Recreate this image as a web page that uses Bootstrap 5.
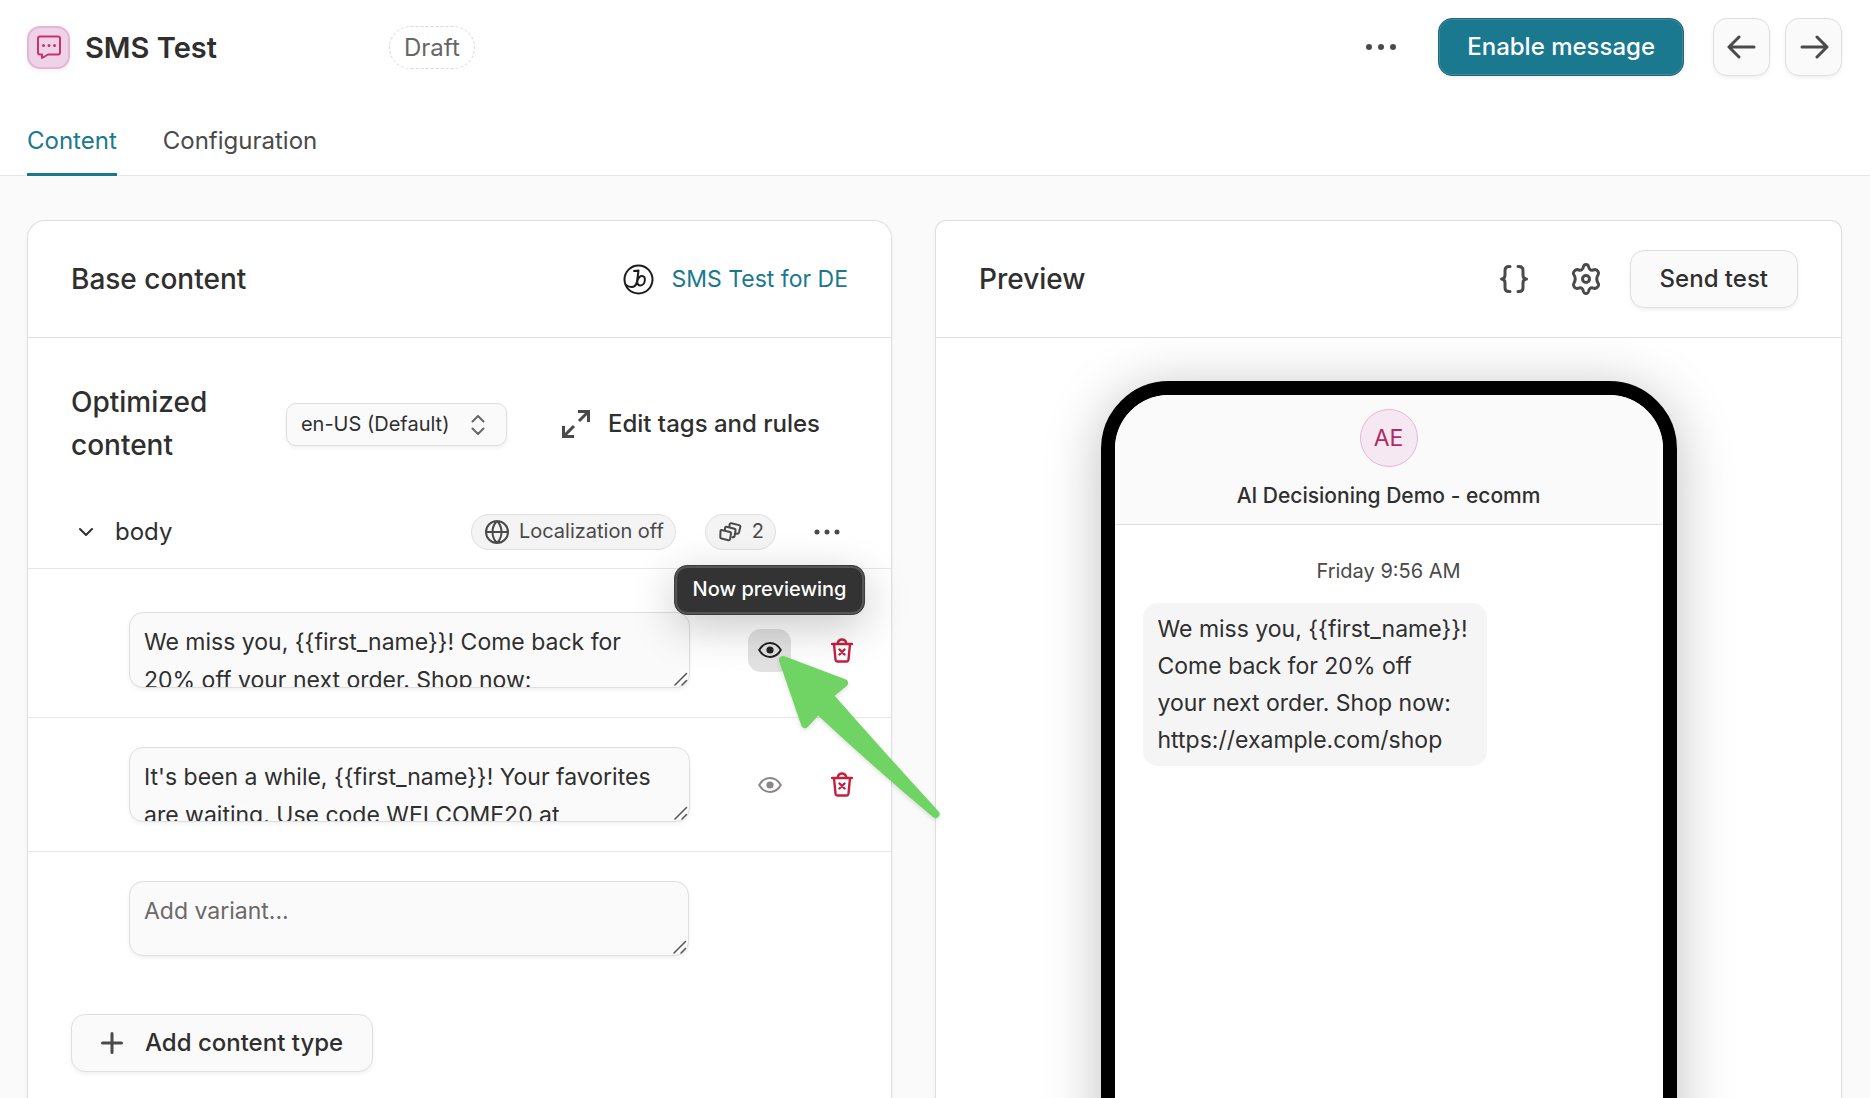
<!DOCTYPE html>
<html lang="en">
<head>
<meta charset="utf-8">
<meta name="viewport" content="width=device-width, initial-scale=1">
<title>SMS Test</title>
<link href="https://cdn.jsdelivr.net/npm/bootstrap@5.3.0/dist/css/bootstrap.min.css" rel="stylesheet">
<style>
  :root { --ink: #2f2f2f; --ink-2: #4a4a4a; --line: #dfdfdf; --soft: #fafafa; --teal: #1a788f; --red: #c3203f; --gap: 29px; --edge: 43px; }
  body { font-family: Inter, "Liberation Sans", sans-serif; font-size: 24px; line-height: 37px; color: var(--ink); background: #fff; }
  svg { display: block; flex: none; }
  .ln { fill: none; stroke: currentColor; stroke-width: 2; stroke-linecap: round; stroke-linejoin: round; }
  .ln-bold { stroke-width: 3; }
  .ln-fine { stroke-width: 1.5; }
  a { color: var(--teal); text-decoration: none; }
  .scroller { background: var(--soft); scrollbar-width: none; padding: 44px 28px 0 27px; }
  .scroller::-webkit-scrollbar { display: none; }
  .panels { gap: var(--edge); }

  .topbar { padding: 18px 28px 0 27px; }
  .topbar .tool-primary { margin: 0 29px; padding: 0 28px; }
  .topbar .tool-square + .tool-square { margin-left: 15px; }
  .msg-icon { width: 43px; height: 43px; border-radius: 13px; background: #f0d2e6; border: 2px solid #e6b5d5; color: #cb2f74; box-shadow: 0 2px 5px rgba(0,0,0,.06); }
  .title { font-size: 29px; line-height: 43px; font-weight: 600; margin: 0 0 0 15px; }
  .draft { height: 43px; padding: 0 14px; border: 1px dashed #d8d8d8; border-radius: 22px; color: #666; line-height: 42px; margin-left: 172px; }
  .tabs { gap: 46px; padding: 28px 27px 0; border-bottom: 1px solid #e8e8e8; }
  .tabs .nav-link { padding: 18px 0 14px; color: var(--ink-2); border-bottom: 3px solid transparent; margin-bottom: -1px; }
  .tabs .nav-link.active { color: var(--teal); border-color: var(--teal); }

  .tool { height: 58px; border: 1px solid var(--line); border-radius: 14px; background: var(--soft); color: var(--ink); font-size: 24px; font-weight: 500; padding: 0 29px; box-shadow: 0 2px 4px rgba(0,0,0,.06); }
  .tool-square { width: 57px; padding: 0; color: var(--ink-2); }
  .tool-primary { background: var(--teal); color: #fff; border-color: #2a6270; box-shadow: inset 0 0 0 1px #3c8ca0, 0 2px 4px rgba(0,0,0,.06); }
  .ghost { width: 43px; height: 43px; padding: 0; border: 0; border-radius: 13px; color: var(--ink-2); }
  .ghost.active { background: #e2e2e2; color: #222; }
  .ghost-wide { width: 57px; height: 57px; }

  .panel { background: #fff; border: 1px solid var(--line); border-bottom: 0; box-shadow: 0 2px 4px rgba(0,0,0,.04); min-height: 940px; min-width: 0; }
  .panel-left { flex: 865 1 0; border-radius: 18px 18px 0 0; }
  .panel-right { flex: 907 1 0; border-radius: 11px 11px 0 0; }
  .panel-head { padding: 28px 43px; height: 117px; border-bottom: 1px solid var(--line); }
  .heading { font-size: 28px; line-height: 43px; font-weight: 500; margin: 0; }
  .source { font-size: 23px; gap: 18px; }

  .optim { padding: 43px 43px 28px; gap: 27px; }
  .locale { width: 221px; height: 43px; appearance: none; background: var(--soft); border: 1px solid var(--line); border-radius: 10px; padding: 0 14px; font-size: 20px; color: var(--ink); box-shadow: 0 2px 4px rgba(0,0,0,.06); }
  .locale-mark { right: 22px; top: 12px; pointer-events: none; color: #666; }
  .edit-btn { border: 0; padding: 0 28px; font-size: 24px; font-weight: 500; color: var(--ink); gap: 18px; }

  .type-row { height: 73px; padding: 0 43px; gap: 15px; }
  .chev { width: 29px; color: var(--ink); }
  .pills, .acts { gap: var(--gap); }
  .pill { height: 36px; border: 1px solid var(--line); border-radius: 18px; background: #f4f4f4; color: var(--ink-2); font-size: 20px; padding: 0 11px 0 13px; gap: 10px; }
  .variant { border-top: 1px solid #e8e8e8; padding: var(--gap) 28px var(--gap) 101px; gap: 58px; }
  .variant-first { padding-top: 43px; }
  .variant-empty { padding-right: 202px; }
  .variant-text { width: 100%; height: 75px; resize: none; overflow: hidden; display: block; border: 1px solid var(--line); border-radius: 14px; background: var(--soft); color: var(--ink); padding: 10px 14px; font-size: 23px; line-height: 38px; box-shadow: 0 2px 4px rgba(0,0,0,.06); }
  .variant-first .variant-text { height: 76px; }
  .variant-text::placeholder { color: #6c6868; }
  .grip { right: 1px; bottom: 1px; color: #555; pointer-events: none; }
  .trash { color: var(--red); }
  .trash .ln { stroke-width: 2.4; }
  .muted-eye { color: #8a8688; }
  .adder { padding: 29px 43px; }
  .adder .tool { gap: 22px; }

  .tip { left: 50%; bottom: 57px; transform: translateX(-50%); white-space: nowrap; height: 50px; font-size: 20px; font-weight: 500; color: #fff; background: #333; border: 1px solid #3c3c3c; border-radius: 13px; padding: 0 18px; box-shadow: inset 0 0 0 2px #565656, 0 12px 44px rgba(0,0,0,.22); z-index: 5; }
  .pointer { left: 26px; top: 23px; z-index: 6; filter: drop-shadow(0 2px 2px rgba(0,0,0,.12)); pointer-events: none; }

  .head-tools { gap: 15px; }
  .phone-area { padding: 43px 0 0; overflow: hidden; }
  .phone { width: 576px; max-width: 92%; height: 1150px; border: 14px solid #000; border-radius: 68px; background: #fff; box-shadow: 0 8px 56px rgba(0,0,0,.25); overflow: hidden; }
  .phone-head { background: var(--soft); border-bottom: 1px solid var(--line); padding: 14px 0 10px; }
  .avatar { width: 58px; height: 58px; border: 1px solid #e9b4d8; border-radius: 50%; background: #f6e8f2; color: #ae2c5f; font-size: 23px; }
  .contact { font-size: 21px; font-weight: 500; margin-top: 10px; }
  .stamp { font-size: 20px; color: var(--ink-2); padding: 28px 0 13px; }
  .bubble { width: 344px; margin-left: 28px; padding: 8px 15px 7px; border-radius: 15px; background: #f5f5f5; font-size: 23px; }
</style>
</head>
<body class="vh-100 d-flex flex-column overflow-hidden">
<header class="flex-shrink-0">
  <div class="topbar d-flex align-items-center">
    <span class="msg-icon d-flex align-items-center justify-content-center">
      <svg width="26" height="26" viewBox="0 0 26 26"><path class="ln" d="M4 2.500h18q2 0 2 2v14q0 2-2 2h-10l-6 3.500v-3.500h-2q-2 0-2-2v-14q0-2 2-2z"/><g fill="currentColor"><circle cx="7.500" cy="11.500" r="1.500"/><circle cx="13" cy="11.500" r="1.500"/><circle cx="18.500" cy="11.500" r="1.500"/></g></svg>
    </span>
    <h1 class="title">SMS Test</h1>
    <span class="draft">Draft</span>
    <button class="btn ghost ghost-wide ms-auto d-flex align-items-center justify-content-center" aria-label="More actions"><svg width="30" height="8" viewBox="0 0 30 8" fill="currentColor"><circle cx="3" cy="4" r="3"/><circle cx="15" cy="4" r="3"/><circle cx="27" cy="4" r="3"/></svg></button>
    <button class="btn tool tool-primary">Enable message</button>
    <button class="btn tool tool-square d-flex align-items-center justify-content-center" aria-label="Previous"><svg width="30" height="30" viewBox="0 0 30 30"><path class="ln ln-bold" d="M27 15H2.500M12 5L2 15l10 10"/></svg></button>
    <button class="btn tool tool-square d-flex align-items-center justify-content-center" aria-label="Next"><svg width="30" height="30" viewBox="0 0 30 30"><path class="ln ln-bold" d="M3 15h24.500M18 5l10 10-10 10"/></svg></button>
  </div>
  <nav class="nav tabs">
    <a class="nav-link active" href="#content">Content</a>
    <a class="nav-link" href="#configuration">Configuration</a>
  </nav>
</header>

<main class="scroller flex-grow-1 overflow-auto">
  <div class="panels d-flex">
    <section class="panel panel-left" id="content">
      <div class="panel-head d-flex align-items-center justify-content-between">
        <h2 class="heading">Base content</h2>
        <a href="#source" class="source d-flex align-items-center">
          <svg width="31" height="31" viewBox="0 0 31 31" color="#1c1c1c"><circle class="ln" cx="15.500" cy="15.500" r="14"/><path class="ln" d="M11 7q3 0 4.500-.5L14 17.500Q13 23 8.500 23 5 23 3.500 21M14.300 17q1.500-5 4.700-5 3.300 0 2.800 4.500t-4.300 5q-3.500 0-3.200-4.500"/></svg>
          <span>SMS Test for DE</span>
        </a>
      </div>

      <div class="optim d-flex align-items-center">
        <h2 class="heading flex-grow-1">Optimized<br>content</h2>
        <div class="position-relative">
          <select class="locale" aria-label="Locale"><option>en-US (Default)</option></select>
          <svg class="locale-mark position-absolute" width="14" height="20" viewBox="0 0 14 20"><path class="ln" d="M1.500 6.500L7 1l5.500 5.500M1.500 13.500L7 19l5.500-5.500"/></svg>
        </div>
        <button class="btn edit-btn d-flex align-items-center"><svg width="28" height="28" viewBox="0 0 28 28" color="#4a4a4a"><path fill="none" stroke="currentColor" stroke-width="3" d="M16 1.500h10.500V12M26.500 1.500L17 11M1.500 16v10.500H12M1.500 26.500L12 16"/></svg>Edit tags and rules</button>
      </div>

      <div class="type-row d-flex align-items-center">
        <button class="btn ghost chev d-flex align-items-center justify-content-center" aria-label="Collapse body"><svg width="16" height="10" viewBox="0 0 16 10"><path class="ln" stroke-width="2.500" d="M2 2l6 6 6-6"/></svg></button>
        <span class="flex-grow-1">body</span>
        <div class="pills d-flex align-items-center">
          <span class="pill d-flex align-items-center"><svg width="24" height="24" viewBox="0 0 24 24"><path class="ln" d="M12 1a11 11 0 1 0 0 22a11 11 0 1 0 0-22zM12 1c-6 6-6 16 0 22M12 1c6 6 6 16 0 22M1 12h22"/></svg>Localization off</span>
          <span class="pill d-flex align-items-center"><svg width="23" height="20" viewBox="0 0 23 20"><path class="ln" d="M2.500 8l8.500 2q1 .3 1 1.300l-1 6q-.3 1.200-1.500 1L2.500 16.500q-1.300-.3-1.200-1.500L1.500 9q0-1.200 1-1zM6 8V6q.2-1.500 1.500-1.200l8 2q1.300.4 1 1.500l-1 6q-.3 1.300-2 1M10.500 5V2.500Q11 1 12.500 1.300l7.500 1.800q1.500.4 1.400 1.500L20 10.500q-.4 1.500-3 1"/></svg>2</span>
          <button class="btn ghost d-flex align-items-center justify-content-center" aria-label="Body options"><svg width="26" height="6" viewBox="0 0 26 6" fill="currentColor"><circle cx="3" cy="3" r="2.500"/><circle cx="13" cy="3" r="2.500"/><circle cx="23" cy="3" r="2.500"/></svg></button>
        </div>
      </div>

      <div class="variant variant-first d-flex align-items-center">
        <div class="position-relative flex-grow-1">
          <textarea class="variant-text" aria-label="Variant 1">We miss you, {{first_name}}! Come back for 20% off your next order. Shop now: https://example.com/shop</textarea>
          <svg class="grip position-absolute" width="16" height="16" viewBox="0 0 16 16"><path class="ln ln-fine" d="M2 14L13.500 2.500M9 14l4.500-4.500"/></svg>
        </div>
        <div class="acts d-flex">
          <div class="position-relative">
            <button class="btn ghost active d-flex align-items-center justify-content-center" aria-label="Preview variant 1"><svg width="24" height="18" viewBox="0 0 24 18"><path class="ln" d="M1.200 9C4 4 8 2 12 2s8 2 10.800 7C20 14 16 16 12 16S4 14 1.200 9z"/><circle cx="12" cy="9" r="3.600" fill="currentColor"/></svg></button>
            <div class="tip position-absolute d-flex align-items-center" role="tooltip">Now previewing</div>
            <svg class="pointer position-absolute" width="168" height="170" viewBox="0 0 168 170"><path fill="#70d465" stroke="#70d465" stroke-width="8" stroke-linejoin="round" d="M9 8L70 31 55 43.500Q110 106 161.500 162 102 112 44 58L31 72z"/></svg>
          </div>
          <button class="btn ghost trash d-flex align-items-center justify-content-center" aria-label="Delete variant 1"><svg width="22" height="25" viewBox="0 0 22 25"><path class="ln" d="M1 6h20M3 6l1.500 15.500q.2 2 2 2h9q1.800 0 2-2L19 6M6.500 5.500q1-4 4.500-4t4.500 4M8.500 11.500l5 5M13.500 11.500l-5 5"/></svg></button>
        </div>
      </div>

      <div class="variant d-flex align-items-center">
        <div class="position-relative flex-grow-1">
          <textarea class="variant-text" aria-label="Variant 2">It's been a while, {{first_name}}! Your favorites are waiting. Use code WELCOME20 at</textarea>
          <svg class="grip position-absolute" width="16" height="16" viewBox="0 0 16 16"><path class="ln ln-fine" d="M2 14L13.500 2.500M9 14l4.500-4.500"/></svg>
        </div>
        <div class="acts d-flex">
          <button class="btn ghost muted-eye d-flex align-items-center justify-content-center" aria-label="Preview variant 2"><svg width="24" height="18" viewBox="0 0 24 18"><path class="ln" d="M1.200 9C4 4 8 2 12 2s8 2 10.800 7C20 14 16 16 12 16S4 14 1.200 9z"/><circle cx="12" cy="9" r="3.600" fill="currentColor"/></svg></button>
          <button class="btn ghost trash d-flex align-items-center justify-content-center" aria-label="Delete variant 2"><svg width="22" height="25" viewBox="0 0 22 25"><path class="ln" d="M1 6h20M3 6l1.500 15.500q.2 2 2 2h9q1.800 0 2-2L19 6M6.500 5.500q1-4 4.500-4t4.500 4M8.500 11.500l5 5M13.500 11.500l-5 5"/></svg></button>
        </div>
      </div>

      <div class="variant variant-empty">
        <div class="position-relative">
          <textarea class="variant-text" aria-label="New variant" placeholder="Add variant..."></textarea>
          <svg class="grip position-absolute" width="16" height="16" viewBox="0 0 16 16"><path class="ln ln-fine" d="M2 14L13.500 2.500M9 14l4.500-4.500"/></svg>
        </div>
      </div>

      <div class="adder">
        <button class="btn tool d-flex align-items-center"><svg width="22" height="22" viewBox="0 0 22 22" color="#4a4a4a"><path class="ln ln-bold" d="M11 1.500v19M1.500 11h19"/></svg>Add content type</button>
      </div>
    </section>

    <section class="panel panel-right">
      <div class="panel-head d-flex align-items-center justify-content-between">
        <h2 class="heading">Preview</h2>
        <div class="head-tools d-flex align-items-center">
          <button class="btn ghost ghost-wide d-flex align-items-center justify-content-center" aria-label="Preview data"><svg width="28" height="28" viewBox="0 0 28 28"><path class="ln ln-bold" d="M10 1.500H9q-4 0-4 4V10q0 4-3.500 4 3.500 0 3.500 4v4.500q0 4 4 4h1M18 1.500h1q4 0 4 4V10q0 4 3.500 4-3.500 0-3.500 4v4.500q0 4-4 4h-1"/></svg></button>
          <button class="btn ghost ghost-wide d-flex align-items-center justify-content-center" aria-label="Preview settings"><svg width="30" height="32" viewBox="0 0 30 32"><path class="ln ln-bold" d="M12.500 3.500Q13 1.500 15 1.500T17.500 3.500Q18.500 8 22 7L24 6.500Q26 6.500 27 8.500T27.500 11Q24 16 27.500 21 28 22 27 23.500T24 25.500L22 25Q18.500 24 17.500 28.500 17 30.500 15 30.500T12.500 28.500Q11.500 24 8 25L6 25.500Q4 25.500 3 23.500T2.500 21Q6 16 2.500 11 2 10 3 8.500T6 6.500L8 7Q11.500 8 12.500 3.500z"/><circle class="ln ln-bold" cx="15" cy="16" r="3.500"/></svg></button>
          <button class="btn tool">Send test</button>
        </div>
      </div>
      <div class="phone-area">
        <div class="phone mx-auto">
          <div class="phone-head d-flex flex-column align-items-center">
            <span class="avatar d-flex align-items-center justify-content-center">AE</span>
            <span class="contact">AI Decisioning Demo - ecomm</span>
          </div>
          <div class="stamp text-center">Friday 9:56 AM</div>
          <div class="bubble">We miss you, {{first_name}}! Come back for 20% off<br>your next order. Shop now: https://example.com/shop</div>
        </div>
      </div>
    </section>
  </div>
</main>
<script src="https://cdn.jsdelivr.net/npm/bootstrap@5.3.0/dist/js/bootstrap.bundle.min.js"></script>
</body>
</html>
